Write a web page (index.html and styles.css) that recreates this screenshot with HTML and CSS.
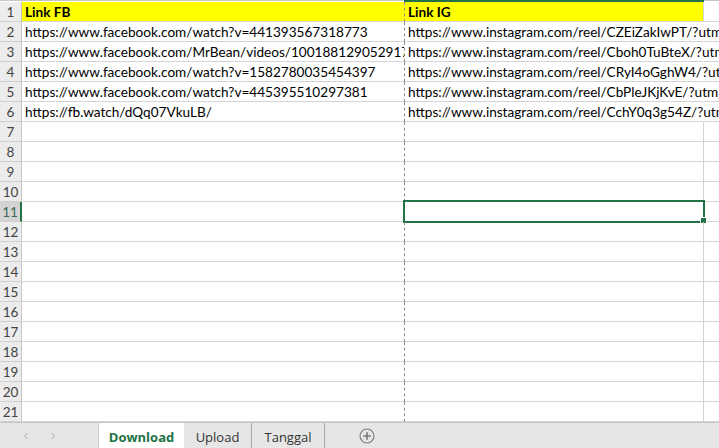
FILE: index.html
```html
<!DOCTYPE html>
<html>
<head>
<meta charset="utf-8">
<link rel="stylesheet" href="styles.css">
</head>
<body>
<div class="app">
  <div class="sheet">
    <div class="topline">
      <div class="t-rh"></div><div class="t-a"></div><div class="t-b"></div><div class="t-c"></div>
    </div>
    <div class="row"><div class="rh">1</div><div class="ca yellow bold">Link FB</div><div class="cb yellow bold">Link IG</div><div class="cc"></div></div>
    <div class="row"><div class="rh">2</div><div class="ca">https://www.facebook.com/watch?v=441393567318773</div><div class="cb over">https://www.instagram.com/reel/CZEiZakIwPT/?utm_source=ig_web_copy_link</div><div class="cc"></div></div>
    <div class="row"><div class="rh">3</div><div class="ca">https://www.facebook.com/MrBean/videos/1001881290529171/</div><div class="cb over">https://www.instagram.com/reel/Cboh0TuBteX/?utm_source=ig_web_copy_link</div><div class="cc"></div></div>
    <div class="row"><div class="rh">4</div><div class="ca">https://www.facebook.com/watch?v=1582780035454397</div><div class="cb over">https://www.instagram.com/reel/CRyI4oGghW4/?utm_source=ig_web_copy_link</div><div class="cc"></div></div>
    <div class="row"><div class="rh">5</div><div class="ca">https://www.facebook.com/watch?v=445395510297381</div><div class="cb over">https://www.instagram.com/reel/CbPleJKjKvE/?utm_source=ig_web_copy_link</div><div class="cc"></div></div>
    <div class="row"><div class="rh">6</div><div class="ca">https://fb.watch/dQq07VkuLB/</div><div class="cb over">https://www.instagram.com/reel/CchY0q3g54Z/?utm_source=ig_web_copy_link</div><div class="cc"></div></div>
    <div class="row"><div class="rh">7</div><div class="ca"></div><div class="cb"></div><div class="cc"></div></div>
    <div class="row"><div class="rh">8</div><div class="ca"></div><div class="cb"></div><div class="cc"></div></div>
    <div class="row"><div class="rh">9</div><div class="ca"></div><div class="cb"></div><div class="cc"></div></div>
    <div class="row"><div class="rh">10</div><div class="ca"></div><div class="cb"></div><div class="cc"></div></div>
    <div class="row"><div class="rh selrh">11</div><div class="ca"></div><div class="cb sel"></div><div class="cc"></div></div>
    <div class="row"><div class="rh">12</div><div class="ca"></div><div class="cb"></div><div class="cc"></div></div>
    <div class="row"><div class="rh">13</div><div class="ca"></div><div class="cb"></div><div class="cc"></div></div>
    <div class="row"><div class="rh">14</div><div class="ca"></div><div class="cb"></div><div class="cc"></div></div>
    <div class="row"><div class="rh">15</div><div class="ca"></div><div class="cb"></div><div class="cc"></div></div>
    <div class="row"><div class="rh">16</div><div class="ca"></div><div class="cb"></div><div class="cc"></div></div>
    <div class="row"><div class="rh">17</div><div class="ca"></div><div class="cb"></div><div class="cc"></div></div>
    <div class="row"><div class="rh">18</div><div class="ca"></div><div class="cb"></div><div class="cc"></div></div>
    <div class="row"><div class="rh">19</div><div class="ca"></div><div class="cb"></div><div class="cc"></div></div>
    <div class="row"><div class="rh">20</div><div class="ca"></div><div class="cb"></div><div class="cc"></div></div>
    <div class="row"><div class="rh">21</div><div class="ca"></div><div class="cb"></div><div class="cc"></div></div>
  </div>
  <div class="tabbar">
    <div class="nav">
      <svg width="8" height="10" viewBox="0 0 8 10"><path d="M5.5 2 L2.5 5 L5.5 8" fill="none" stroke="#c4c4c4" stroke-width="1.2"/></svg>
      <svg width="8" height="10" viewBox="0 0 8 10"><path d="M2.5 2 L5.5 5 L2.5 8" fill="none" stroke="#c4c4c4" stroke-width="1.2"/></svg>
    </div>
    <div class="tab active">Download</div>
    <div class="tab">Upload</div>
    <div class="tab">Tanggal</div>
    <div class="add">
      <svg width="16" height="16" viewBox="0 0 16 16"><circle cx="8" cy="8" r="7" fill="none" stroke="#7a7a7a" stroke-width="1.1"/><path d="M8 4.2 V11.8 M4.2 8 H11.8" stroke="#7a7a7a" stroke-width="1.6"/></svg>
    </div>
  </div>
</div>
</body>
</html>
```
FILE: styles.css
```css
html, body {
  margin: 0;
  padding: 0;
  background: #ffffff;
}
.app {
  width: 719px;
  height: 448px;
  overflow: hidden;
  display: flex;
  flex-direction: column;
  font-family: Lato, "Open Sans", sans-serif;
  font-size: 13.6px;
  color: #000;
}
.sheet {
  height: 422px;
  display: flex;
  flex-direction: column;
}
.topline {
  display: flex;
  height: 2px;
}
.t-rh { width: 22px; border-top: 1px solid #c6c6c6; box-sizing: border-box; }
.t-a { width: 382px; border-top: 1px solid #c6c6c6; box-sizing: border-box; }
.t-b { width: 300px; background: #217346; }
.t-c { flex: 1; border-top: 1px solid #c6c6c6; box-sizing: border-box; }
.row {
  display: flex;
  height: 20px;
}
.row > div {
  box-sizing: border-box;
  height: 20px;
  border-bottom: 1px solid #d4d4d4;
  line-height: 20px;
  white-space: nowrap;
}
.rh {
  width: 22px;
  flex: none;
  background: #ececec;
  border-right: 1px solid #c6c6c6;
  border-bottom-color: #d0d0d0 !important;
  text-align: center;
  color: #444;
  font-size: 13.5px;
}
.selrh {
  background: #d4d4d4;
  border-right: 2px solid #217346;
  color: #3d6b50;
}
.ca {
  width: 382px;
  flex: none;
  overflow: hidden;
  padding-left: 3px;
}
.cb {
  width: 300px;
  flex: none;
  padding-left: 3px;
  border-left: 1px dashed #8c8c8c;
  border-right: 1px solid #d4d4d4;
  position: relative;
  z-index: 1;
}
.cb.over {
  border-right-color: transparent;
}
.cc {
  flex: 1;
}
.yellow {
  background: #ffff00;
}
.bold {
  font-weight: bold;
}
.sel::before {
  content: "";
  position: absolute;
  left: -2px;
  top: -2px;
  width: 302px;
  height: 23px;
  box-sizing: border-box;
  border: 2px solid #217346;
}
.sel::after {
  content: "";
  position: absolute;
  left: 296px;
  top: 16px;
  width: 5px;
  height: 5px;
  background: #217346;
  box-shadow: 0 0 0 1px #ffffff;
}
.tabbar {
  flex: 1;
  display: flex;
  align-items: stretch;
  background: #e6e6e6;
  border-top: 1px solid #c6c6c6;
  box-sizing: border-box;
  font-family: "Open Sans", Lato, sans-serif;
  font-size: 13px;
  color: #333;
}
.nav {
  width: 98px;
  display: flex;
  align-items: center;
  gap: 19px;
  padding-left: 22px;
  box-sizing: border-box;
}
.tab {
  display: flex;
  align-items: center;
  justify-content: center;
  box-sizing: border-box;
  padding-top: 2px;
}
.tab.active {
  width: 86px;
  background: #ffffff;
  color: #217346;
  font-weight: bold;
  border-left: 1px solid #d0d0d0;
}
.tab:nth-child(3) {
  width: 68px;
  border-right: 1px solid #a8a8a8;
}
.tab:nth-child(4) {
  width: 73px;
  border-right: 1px solid #a8a8a8;
}
.add {
  display: flex;
  align-items: center;
  padding-left: 34px;
}
```
